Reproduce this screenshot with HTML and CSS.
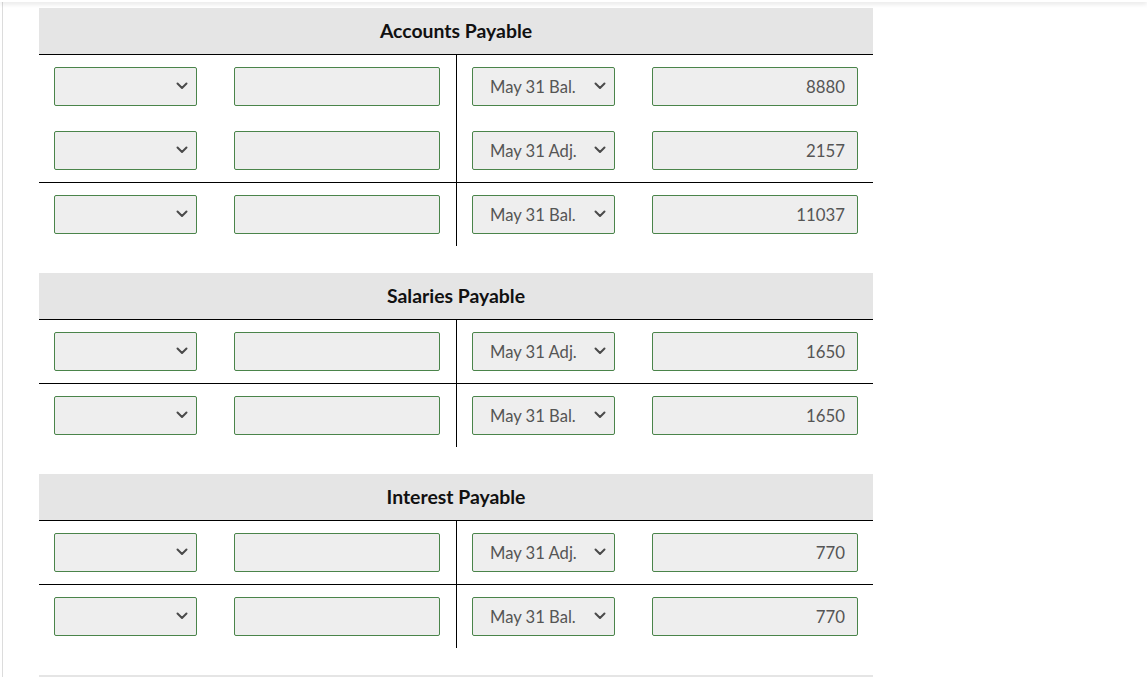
FILE: index.html
```html
<!DOCTYPE html>
<html lang="en">
<head>
<meta charset="utf-8">
<title>T Accounts</title>
<link rel="stylesheet" href="styles.css">
</head>
<body>
<div class="topshade"></div>
<div class="page">
  <div class="content">

    <section class="taccount">
      <div class="thead">Accounts Payable</div>
      <div class="trow">
        <div class="cell left">
          <div class="sel"><select class="select"><option></option></select><svg class="chev" viewBox="0 0 12 8"><path d="M1.5 1.5 6 6l4.5-4.5"/></svg></div>
          <input class="amount" type="text" value="">
        </div>
        <div class="cell right">
          <div class="sel"><select class="select"><option>May 31 Bal.</option></select><svg class="chev" viewBox="0 0 12 8"><path d="M1.5 1.5 6 6l4.5-4.5"/></svg></div>
          <input class="amount" type="text" value="8880">
        </div>
      </div>
      <div class="trow gap">
        <div class="cell left">
          <div class="sel"><select class="select"><option></option></select><svg class="chev" viewBox="0 0 12 8"><path d="M1.5 1.5 6 6l4.5-4.5"/></svg></div>
          <input class="amount" type="text" value="">
        </div>
        <div class="cell right">
          <div class="sel"><select class="select"><option>May 31 Adj.</option></select><svg class="chev" viewBox="0 0 12 8"><path d="M1.5 1.5 6 6l4.5-4.5"/></svg></div>
          <input class="amount" type="text" value="2157">
        </div>
      </div>
      <div class="trow total">
        <div class="cell left">
          <div class="sel"><select class="select"><option></option></select><svg class="chev" viewBox="0 0 12 8"><path d="M1.5 1.5 6 6l4.5-4.5"/></svg></div>
          <input class="amount" type="text" value="">
        </div>
        <div class="cell right">
          <div class="sel"><select class="select"><option>May 31 Bal.</option></select><svg class="chev" viewBox="0 0 12 8"><path d="M1.5 1.5 6 6l4.5-4.5"/></svg></div>
          <input class="amount" type="text" value="11037">
        </div>
      </div>
    </section>

    <section class="taccount">
      <div class="thead">Salaries Payable</div>
      <div class="trow">
        <div class="cell left">
          <div class="sel"><select class="select"><option></option></select><svg class="chev" viewBox="0 0 12 8"><path d="M1.5 1.5 6 6l4.5-4.5"/></svg></div>
          <input class="amount" type="text" value="">
        </div>
        <div class="cell right">
          <div class="sel"><select class="select"><option>May 31 Adj.</option></select><svg class="chev" viewBox="0 0 12 8"><path d="M1.5 1.5 6 6l4.5-4.5"/></svg></div>
          <input class="amount" type="text" value="1650">
        </div>
      </div>
      <div class="trow total">
        <div class="cell left">
          <div class="sel"><select class="select"><option></option></select><svg class="chev" viewBox="0 0 12 8"><path d="M1.5 1.5 6 6l4.5-4.5"/></svg></div>
          <input class="amount" type="text" value="">
        </div>
        <div class="cell right">
          <div class="sel"><select class="select"><option>May 31 Bal.</option></select><svg class="chev" viewBox="0 0 12 8"><path d="M1.5 1.5 6 6l4.5-4.5"/></svg></div>
          <input class="amount" type="text" value="1650">
        </div>
      </div>
    </section>

    <section class="taccount">
      <div class="thead">Interest Payable</div>
      <div class="trow">
        <div class="cell left">
          <div class="sel"><select class="select"><option></option></select><svg class="chev" viewBox="0 0 12 8"><path d="M1.5 1.5 6 6l4.5-4.5"/></svg></div>
          <input class="amount" type="text" value="">
        </div>
        <div class="cell right">
          <div class="sel"><select class="select"><option>May 31 Adj.</option></select><svg class="chev" viewBox="0 0 12 8"><path d="M1.5 1.5 6 6l4.5-4.5"/></svg></div>
          <input class="amount" type="text" value="770">
        </div>
      </div>
      <div class="trow total">
        <div class="cell left">
          <div class="sel"><select class="select"><option></option></select><svg class="chev" viewBox="0 0 12 8"><path d="M1.5 1.5 6 6l4.5-4.5"/></svg></div>
          <input class="amount" type="text" value="">
        </div>
        <div class="cell right">
          <div class="sel"><select class="select"><option>May 31 Bal.</option></select><svg class="chev" viewBox="0 0 12 8"><path d="M1.5 1.5 6 6l4.5-4.5"/></svg></div>
          <input class="amount" type="text" value="770">
        </div>
      </div>
    </section>

    <section class="taccount">
      <div class="thead"></div>
    </section>

  </div>
</div>
</body>
</html>
```

FILE: styles.css
```css
* { box-sizing: border-box; }

html, body {
  margin: 0;
  padding: 0;
  background: #fff;
  font-family: Lato, "Open Sans", Arial, sans-serif;
}

.topshade {
  position: fixed;
  top: 0;
  left: 0;
  right: 0;
  height: 2px;
  background: #fff;
  box-shadow: 0 1px 5px rgba(0, 0, 0, 0.22);
  z-index: 5;
}

.page {
  margin-left: 2px;
  border-left: 1px solid #dcdcdc;
  min-height: 100vh;
}

.content {
  padding: 8px 0 0 36px;
}

.taccount {
  width: 834px;
  margin-bottom: 27px;
}

.thead {
  height: 47px;
  background: #e5e5e5;
  border-bottom: 1px solid #000;
  text-align: center;
  font-weight: 700;
  font-size: 19.4px;
  line-height: 46px;
  color: #111;
}

.trow {
  display: grid;
  grid-template-columns: 418px 416px;
}

.trow.total { border-top: 1px solid #000; }

.cell {
  display: flex;
  align-items: center;
  gap: 37px;
  padding: 12px 0 12px 15px;
}

.trow.gap .cell { padding-top: 13px; }

.cell.left {
  border-right: 1px solid #000;
}

.cell.right {
  padding-left: 15px;
}

.sel {
  position: relative;
  width: 143px;
  height: 39px;
  flex: none;
}

.select {
  -webkit-appearance: none;
  appearance: none;
  width: 100%;
  height: 100%;
  margin: 0;
  border: 1px solid #4a844a;
  border-radius: 2px;
  background: #eeeeee;
  font-family: Lato, "Open Sans", Arial, sans-serif;
  font-size: 16.6px;
  color: #555;
  padding: 0 28px 0 17px;
  outline: none;
}

.chev {
  position: absolute;
  right: 9px;
  top: 15px;
  width: 12px;
  height: 8px;
  pointer-events: none;
}

.chev path {
  fill: none;
  stroke: #4a4a4a;
  stroke-width: 2;
  stroke-linecap: round;
  stroke-linejoin: round;
}

.amount {
  width: 206px;
  height: 39px;
  flex: none;
  margin: 0;
  border: 1px solid #4a844a;
  border-radius: 2px;
  background: #eeeeee;
  font-family: Lato, "Open Sans", Arial, sans-serif;
  font-size: 16.8px;
  color: #555;
  text-align: right;
  padding: 0 12px;
  outline: none;
}
```
